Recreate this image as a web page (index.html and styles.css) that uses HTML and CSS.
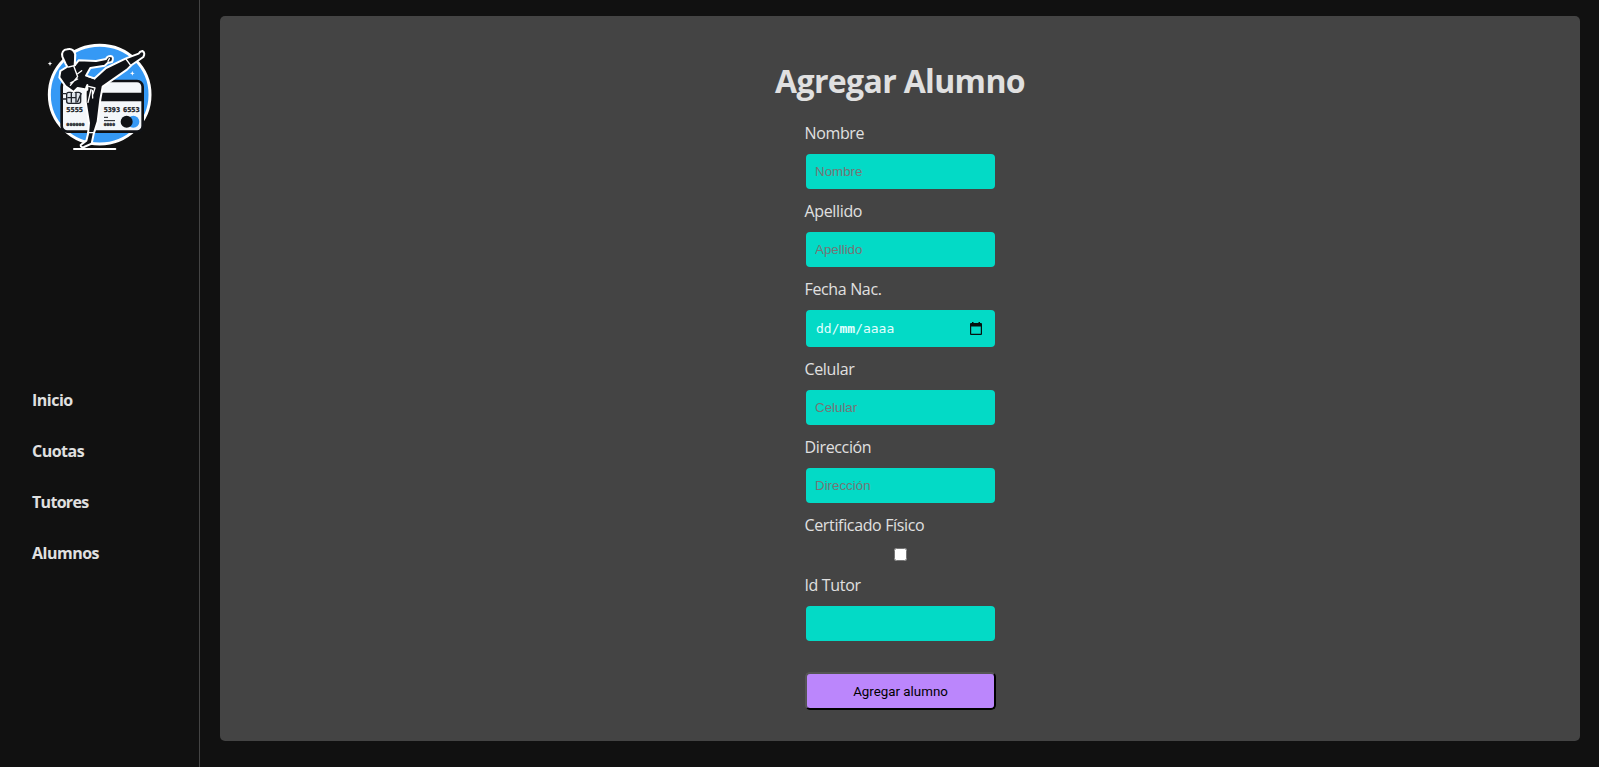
FILE: index.html
```html
<!DOCTYPE html>
<html lang="es">
<head>
<meta charset="utf-8">
<title>Agregar Alumno</title>
<link rel="stylesheet" href="styles.css">
</head>
<body>
<aside class="sidebar">
  <svg class="logo" viewBox="0 0 360 360" role="img" aria-label="Logo">
    <ellipse cx="179" cy="179" rx="151" ry="148" fill="#3599f5" stroke="#fff" stroke-width="9"/>
    <rect x="65" y="138" width="243" height="152" rx="17" fill="#f4f7fa" stroke="#101216" stroke-width="8"/>
    <path d="M150 173H309V199H150Z" fill="#101216"/>
    <rect x="80" y="172" width="42" height="33" rx="6" fill="#dfe5ec" stroke="#20242b" stroke-width="4"/>
    <path d="M66 176h12M66 192h12M82 188h24M94 174v29M108 174v29M112 202L124 174" stroke="#20242b" stroke-width="4"/>
    <g class="card-text">
      <text x="79" y="230" font-size="20" textLength="50" lengthAdjust="spacingAndGlyphs">5555</text>
      <text x="191" y="230" font-size="20" textLength="49" lengthAdjust="spacingAndGlyphs">5393</text>
      <text x="249" y="230" font-size="20" textLength="50" lengthAdjust="spacingAndGlyphs">6553</text>
      <text x="79" y="274" font-size="13" textLength="55" lengthAdjust="spacingAndGlyphs">000000</text>
      <text x="191" y="274" font-size="13" textLength="34" lengthAdjust="spacingAndGlyphs">0000</text>
    </g>
    <path d="M192 247h12M192 257h33" stroke="#15181d" stroke-width="3"/>
    <circle cx="280" cy="260" r="18" fill="#3599f5"/>
    <circle cx="260" cy="260" r="18" fill="#101216"/>
    <path d="M142 150C134 164 138 181 137 201L147 264L144 297L139 317L122 330Q122 339 132 336L155 326L161 297L173 260L181 193L188 155L261 104L275 90L310 66Q317 53 307 48Q299 49 296 56L258 70L198 99L164 130L138 122L151 99L194 92L203 84L216 81Q223 65 212 63Q201 63 198 72L168 78L116 76L104 91L106 59Q100 38 82 43Q63 45 67 65L77 87L82 95L61 108L58 127L76 153L101 171L113 159L142 164Z" fill="#101216" stroke="#fff" stroke-width="6" stroke-linejoin="round"/>
    <path d="M105 60L106 91L86 96M102 95L113 125L91 151M113 116L125 107M91 144L113 132M146 154L165 159L159 177M164 132L144 124M258 72L272 91M143 293L161 293M208 71L204 79M153 163L144 202M157 166L158 189" fill="none" stroke="#fff" stroke-width="4" stroke-linecap="round" stroke-linejoin="round"/>
    <path d="M102 342H226" stroke="#fff" stroke-width="6" stroke-linecap="round"/>
    <path d="M30 79l2 5 5 2-5 2-2 5-2-5-5-2 5-2zM277 108l2 5 5 2-5 2-2 5-2-5-5-2 5-2z" fill="#fff"/>
  </svg>
  <nav class="menu">
    <a class="menu-link">Inicio</a>
    <a class="menu-link">Cuotas</a>
    <a class="menu-link tight">Tutores</a>
    <a class="menu-link">Alumnos</a>
  </nav>
</aside>
<main class="panel">
  <h1 class="title">Agregar Alumno</h1>
  <form class="form">
    <label class="label" for="nombre">Nombre</label>
    <input class="input" id="nombre" placeholder="Nombre">
    <label class="label" for="apellido">Apellido</label>
    <input class="input" id="apellido" placeholder="Apellido">
    <label class="label">Fecha Nac.</label>
    <div class="input date">
      <span>dd/<span class="month">mm</span>/aaaa</span>
      <svg class="calendar" viewBox="0 0 12 13"><path d="M2 0h1.5v1h5V0H10v1h1q1 0 1 1v10q0 1-1 1H1q-1 0-1-1V2q0-1 1-1h1zM1.2 4.5v7.3h9.6V4.5z" fill="#06110f" fill-rule="evenodd"/></svg>
    </div>
    <label class="label" for="celular">Celular</label>
    <input class="input" id="celular" placeholder="Celular">
    <label class="label" for="direccion">Dirección</label>
    <input class="input" id="direccion" placeholder="Dirección">
    <label class="label" for="certificado">Certificado Físico</label>
    <input class="check" id="certificado" type="checkbox">
    <label class="label" for="tutor">Id Tutor</label>
    <input class="input" id="tutor">
    <button class="submit" type="button">Agregar alumno</button>
  </form>
</main>
</body>
</html>
```
FILE: styles.css
```css
* { box-sizing: border-box; }
body {
  margin: 0;
  height: 767px;
  display: flex;
  overflow: hidden;
  background: #111;
  color: #e0e0e0;
  font-family: "Open Sans", "Noto Sans", sans-serif;
}
.sidebar {
  width: 200px;
  flex: none;
  border-right: 1px solid #444;
  padding-top: 35px;
}
.logo { display: block; width: 120px; height: 120px; margin-left: 40px; }
.card-text { font-family: "DejaVu Sans Mono", monospace; font-weight: bold; fill: #15181d; stroke: #15181d; stroke-width: 0.8px; }
.menu {
  display: flex;
  flex-direction: column;
  gap: 27px;
  padding-left: 32px;
  margin-top: 233px;
}
.menu-link { font-size: 16px; line-height: 24px; font-weight: 700; letter-spacing: -0.5px; }
.tight { letter-spacing: -0.7px; }
.panel {
  width: 1360px;
  height: 725px;
  margin: 16px 0 0 20px;
  padding-top: 43px;
  background: #444;
  border-radius: 5px;
}
.title {
  margin: 0;
  font-size: 32px;
  line-height: 44px;
  font-weight: 700;
  letter-spacing: -0.65px;
  text-align: center;
}
.form {
  width: 190px;
  margin: 18px auto 0;
  display: flex;
  flex-direction: column;
  position: relative;
  left: 1px;
}
.label { font-size: 16px; line-height: 24px; margin: 0 0 9px -1.5px; letter-spacing: -0.35px; white-space: nowrap; }
.input {
  width: 189px;
  height: 35px;
  margin: 0 0 10px;
  padding: 0 9px;
  border: 0;
  border-radius: 4px;
  background: #03dac6;
  font: 13.333px "Liberation Sans", Arial, sans-serif;
}
.input::placeholder { color: #757575; opacity: 1; }
.date {
  height: 37px;
  padding: 0 13px 0 10px;
  display: flex;
  align-items: center;
  justify-content: space-between;
  color: #e0ffff;
  font: 13px "DejaVu Sans Mono", monospace;
}
.month { font-weight: 700; }
.calendar { width: 12px; height: 13px; }
.check { width: 13px; height: 13px; margin: 2px 0 12px 88px; }
.submit {
  width: 191px;
  height: 38px;
  margin: 21px 0 0 -1px;
  border: 2px solid;
  border-color: #555 #000 #000 #555;
  border-radius: 5px;
  background: #bb86fc;
  color: #000;
  font: 13.333px Roboto, sans-serif;
}
```
